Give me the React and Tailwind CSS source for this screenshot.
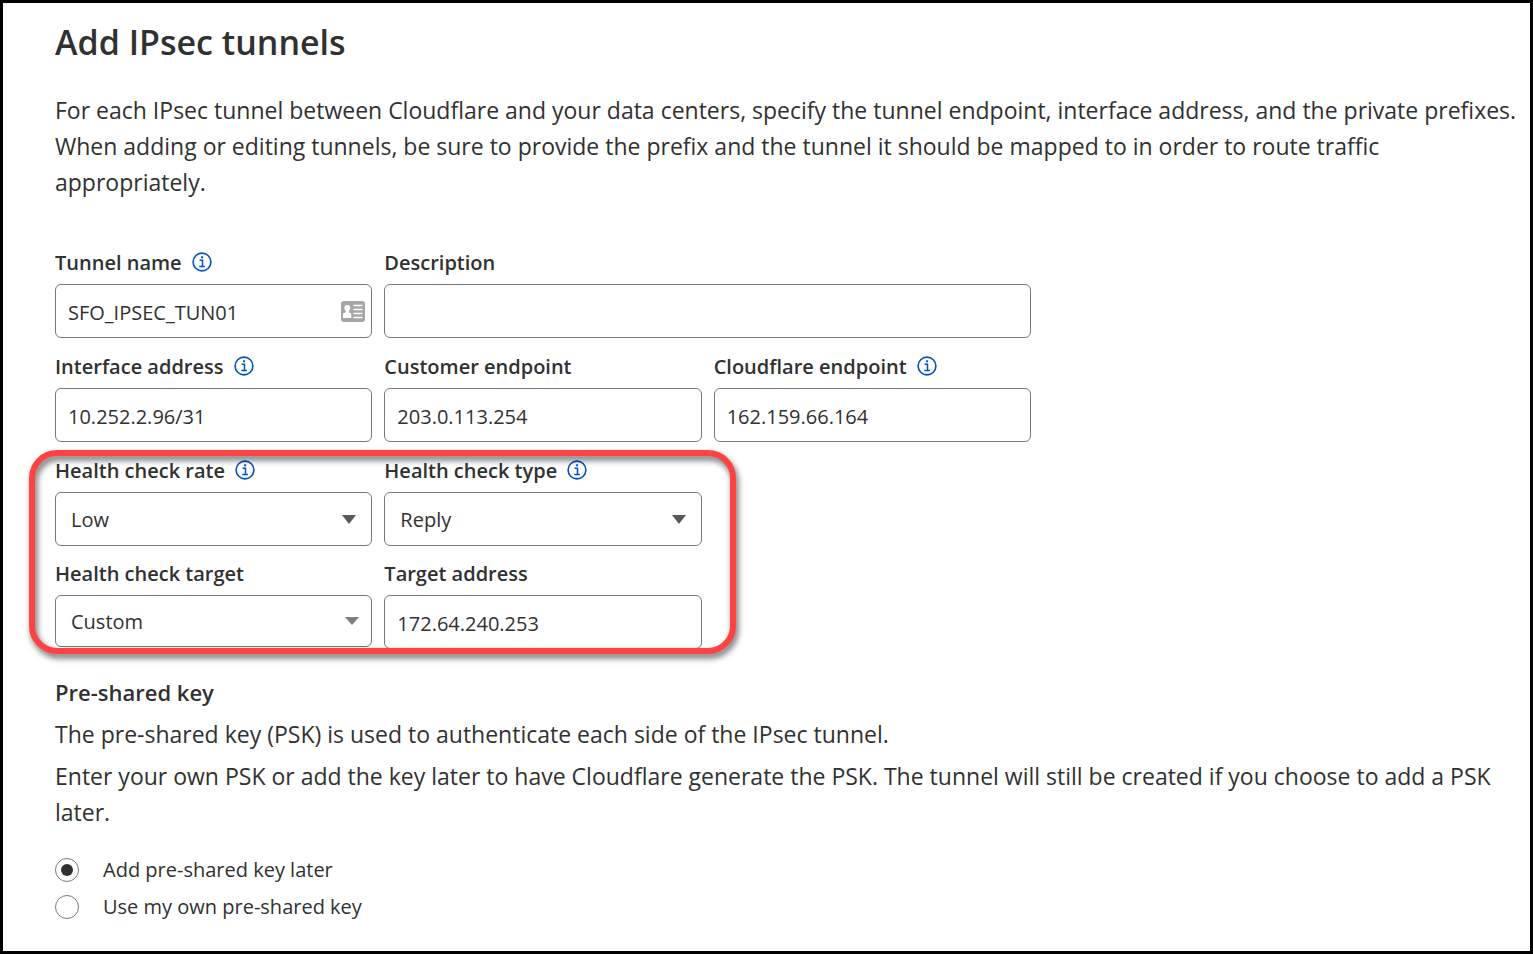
import React, { useId } from "react";

function InfoButton({ topic }) {
  return (
    <button type="button" aria-label={`About ${topic}`} className="mb-0.5 text-[#0051c3]">
      <svg viewBox="0 0 20 20" className="size-5" fill="none" stroke="currentColor" aria-hidden="true">
        <circle cx="10" cy="10" r="8.9" strokeWidth="1.6" />
        <path d="M7.6 8.3h2.9v6M7.3 14.4h5.6" strokeWidth="1.5" />
        <rect x="9.1" y="4.3" width="2" height="2" fill="currentColor" stroke="none" />
      </svg>
    </button>
  );
}

function ContactCardIcon() {
  return (
    <svg viewBox="0 0 24 21" className="h-[21px] w-6" aria-hidden="true">
      <rect width="24" height="21" rx="3" fill="#a6a6a6" />
      <circle cx="6.3" cy="7" r="3" fill="#fff" />
      <path d="M4.800 9h3v2.200l1.600.9c.6.3.9.7.9 1.400V17H2v-3.500c0-.7.3-1.100.9-1.400l1.900-.9z" fill="#fff" />
      <path d="M12.500 4.500H21.500M12.500 8.500H21.500M12.500 12.500H21.500M12.500 16.500H21.500" stroke="#fff" strokeWidth="1.600" />
    </svg>
  );
}

function Field({ label, info, className = "", children }) {
  const id = useId();
  return (
    <div className={className}>
      <div className="mb-1.5 flex h-[30px] items-center gap-2.5">
        <label htmlFor={id} className="text-[20px] leading-[30px] font-semibold">
          {label}
        </label>
        {info && <InfoButton topic={label} />}
      </div>
      {children(id)}
    </div>
  );
}

function TextField({ label, info, value = "", className, icon }) {
  return (
    <Field label={label} info={info} className={className}>
      {(id) => (
        <div className="flex h-[54px] items-center rounded-md border border-[#797979] bg-white pr-1.5 pl-3">
          <input
            id={id}
            type="text"
            defaultValue={value}
            className="h-full min-w-0 flex-1 bg-transparent pt-0.5 text-[20px] outline-none"
          />
          {icon}
        </div>
      )}
    </Field>
  );
}

function SelectField({ label, info, options, compact }) {
  return (
    <Field label={label} info={info}>
      {(id) => (
        <div className="grid items-center">
          <select
            id={id}
            className={`col-start-1 row-start-1 w-full appearance-none rounded-md border border-[#797979] bg-white px-[15px] pt-0.5 text-[20px] outline-none ${
              compact ? "h-[52px]" : "h-[54px]"
            }`}
          >
            {options.map((option) => (
              <option key={option}>{option}</option>
            ))}
          </select>
          <svg
            viewBox="0 0 14 9"
            preserveAspectRatio="none"
            aria-hidden="true"
            className={`pointer-events-none col-start-1 row-start-1 justify-self-end ${
              compact ? "mr-[13px] h-2 w-3.5 text-[#7a7e83]" : "mr-4 h-[9px] w-3.5 text-[#595959]"
            }`}
          >
            <path d="M0 0h14L7 9z" fill="currentColor" />
          </svg>
        </div>
      )}
    </Field>
  );
}

function RadioOption({ label, checked }) {
  return (
    <label className="flex items-center gap-6 text-[20px] leading-[37px]">
      <input
        type="radio"
        name="psk"
        defaultChecked={checked}
        className="grid size-6 appearance-none place-content-center rounded-full border border-[#797979] before:size-3 before:rounded-full checked:before:bg-[#313131]"
      />
      {label}
    </label>
  );
}

export default function App() {
  return (
    <main className="min-h-screen border-[3px] border-black bg-white pt-4 pr-2 pb-6 pl-[52px] font-['Open_Sans','Noto_Sans',sans-serif] text-[#313131]">
      <h1 className="text-[34px] leading-[46px] font-semibold">Add IPsec tunnels</h1>
      <p className="mt-[27px] text-[23px] leading-9">
        For each IPsec tunnel between Cloudflare and your data centers, specify the tunnel endpoint, interface
        address, and the private prefixes. When adding or editing tunnels, be sure to provide the prefix and the
        tunnel it should be mapped to in order to route traffic appropriately.
      </p>

      <form className="mt-12">
        <div className="max-w-[976px]">
          <div className="grid grid-cols-3 gap-x-3 gap-y-3.5">
            <TextField label="Tunnel name" info value="SFO_IPSEC_TUN01" icon={<ContactCardIcon />} />
            <TextField label="Description" className="col-span-2" />
            <TextField label="Interface address" info value="10.252.2.96/31" />
            <TextField label="Customer endpoint" value="203.0.113.254" />
            <TextField label="Cloudflare endpoint" info value="162.159.66.164" />
            <div className="relative col-span-2 grid grid-cols-2 gap-x-3 gap-y-[13px]">
              <SelectField label="Health check rate" info options={["Low", "Medium", "High"]} />
              <SelectField label="Health check type" info options={["Reply", "Request"]} />
              <SelectField label="Health check target" options={["Custom", "Default"]} compact />
              <TextField label="Target address" value="172.64.240.253" />
              <div className="pointer-events-none absolute -top-1.5 -right-[34px] -bottom-[5px] -left-[26px] rounded-[28px] border-6 border-[#ff4343] drop-shadow-[2px_4px_3px_rgba(0,0,0,0.6)]" />
            </div>
          </div>
        </div>

        <section className="mt-[27px]">
          <h2 className="text-[22px] leading-8 font-semibold">Pre-shared key</h2>
          <p className="mt-2 text-[23px] leading-9">
            The pre-shared key (PSK) is used to authenticate each side of the IPsec tunnel.
          </p>
          <p className="mt-1.5 text-[23px] leading-9">
            Enter your own PSK or add the key later to have Cloudflare generate the PSK. The tunnel will still be
            created if you choose to add a PSK later.
          </p>
          <div role="radiogroup" aria-label="Pre-shared key" className="mt-[21px]">
            <RadioOption label="Add pre-shared key later" checked />
            <RadioOption label="Use my own pre-shared key" />
          </div>
        </section>
      </form>
    </main>
  );
}
